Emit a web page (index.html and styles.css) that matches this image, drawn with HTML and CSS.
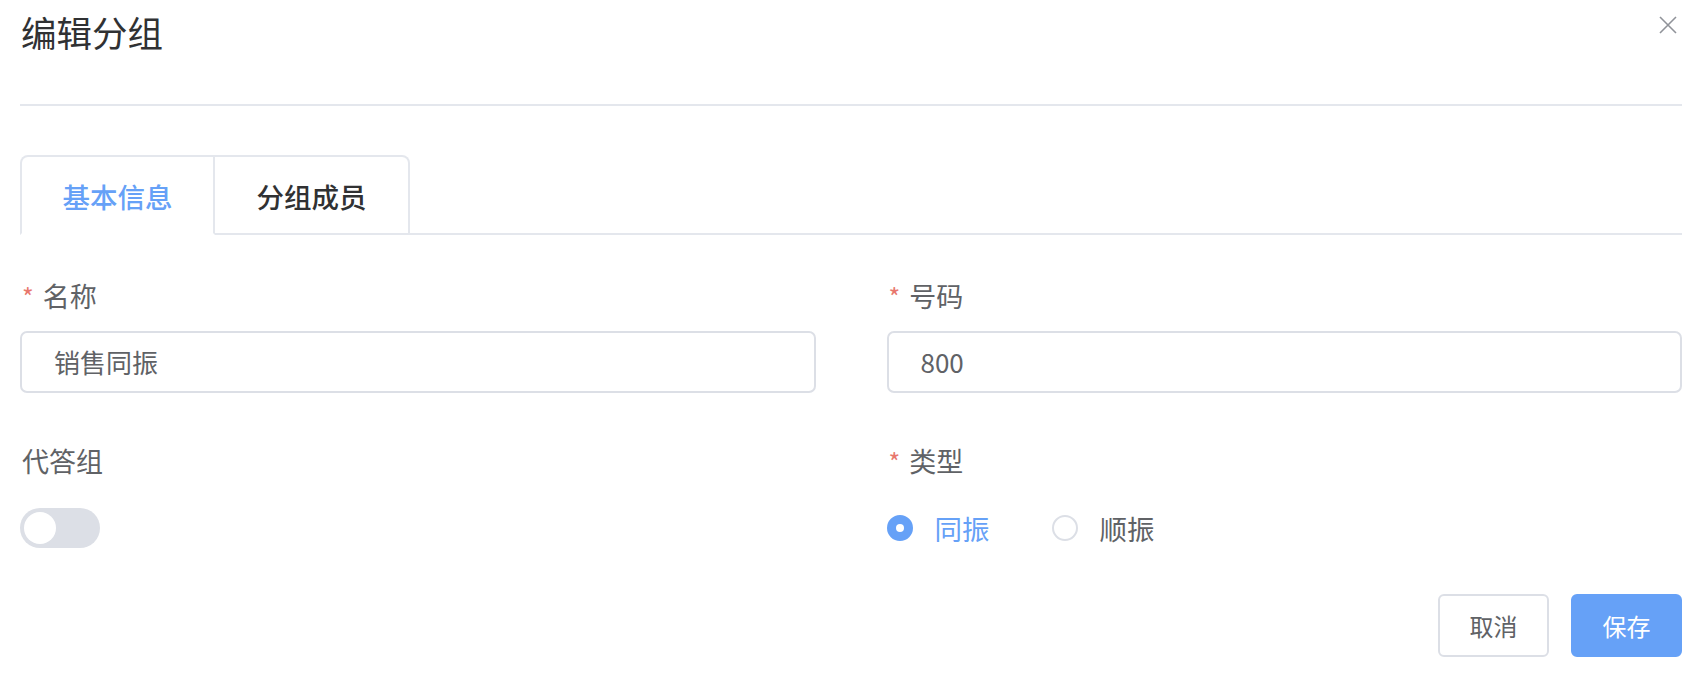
FILE: index.html
```html
<!DOCTYPE html>
<html lang="zh-CN">
<head>
<meta charset="utf-8">
<title>编辑分组</title>
<link rel="stylesheet" href="styles.css">
</head>
<body>
<div class="dialog">
  <div class="dialog-header">
    <span class="dialog-title">编辑分组</span>
    <button class="close-btn" aria-label="关闭">
      <svg width="18" height="18" viewBox="0 0 18 18"><path d="M1 1L17 17M17 1L1 17" stroke="#909399" stroke-width="1.6" fill="none"/></svg>
    </button>
  </div>
  <div class="tabs">
    <div class="tab active">基本信息</div>
    <div class="tab">分组成员</div>
  </div>
  <div class="form">
    <div class="form-item">
      <label class="label required">名称</label>
      <div class="input">销售同振</div>
    </div>
    <div class="form-item">
      <label class="label required">号码</label>
      <div class="input">800</div>
    </div>
    <div class="form-item">
      <label class="label">代答组</label>
      <div class="control"><span class="switch"><span class="knob"></span></span></div>
    </div>
    <div class="form-item">
      <label class="label required">类型</label>
      <div class="control radios">
        <span class="radio checked"><span class="radio-dot"></span><span class="radio-text">同振</span></span>
        <span class="radio"><span class="radio-dot"></span><span class="radio-text">顺振</span></span>
      </div>
    </div>
  </div>
  <div class="footer">
    <button class="btn">取消</button>
    <button class="btn primary">保存</button>
  </div>
</div>
</body>
</html>
```
FILE: styles.css
```css
* { box-sizing: border-box; }
html, body { margin: 0; padding: 0; background: #fff; }
body {
  font-family: "Noto Sans CJK SC", "Liberation Sans", sans-serif;
  color: #606266;
}
.dialog { padding: 0 24px 0 20px; }
.dialog-header {
  display: flex;
  justify-content: space-between;
  align-items: flex-start;
  height: 106px;
  padding-top: 7px;
  border-bottom: 2px solid #e4e7ed;
}
.dialog-title {
  font-size: 35.5px;
  line-height: 50px;
  color: #303133;
  padding-left: 1px;
}
.close-btn {
  border: 0;
  background: none;
  padding: 0;
  margin: 9px 5px 0 0;
  width: 18px;
  height: 18px;
  display: flex;
}
.tabs {
  display: flex;
  margin-top: 49px;
  border-bottom: 2px solid #e4e7ed;
  height: 80px;
}
.tab {
  width: 195px;
  height: 80px;
  display: flex;
  align-items: center;
  justify-content: center;
  font-size: 27.5px;
  font-weight: 500;
  color: #303133;
  border: 2px solid #e4e7ed;
  border-left: 0;
  border-bottom: 2px solid #e4e7ed;
  padding-top: 2px;
}
.tab:first-child {
  border-left: 2px solid #e4e7ed;
  border-top-left-radius: 8px;
}
.tab:last-child { border-top-right-radius: 8px; }
.tab.active {
  color: #66a1f7;
  border-bottom-color: #fff;
}
.form {
  display: grid;
  grid-template-columns: 1fr 1fr;
  column-gap: 71px;
  row-gap: 48px;
  margin-top: 41px;
}
.form-item { display: flex; flex-direction: column; }
.label {
  font-size: 27px;
  line-height: 40px;
  color: #606266;
  padding-left: 2px;
}
.label.required::before {
  content: "*";
  color: #e8776d;
  margin-right: 9px;
  font-size: 25px;
}
.input {
  margin-top: 15px;
  height: 62px;
  border: 2px solid #dcdfe6;
  border-radius: 7px;
  padding-left: 32px;
  font-size: 26px;
  line-height: 58px;
  color: #606266;
}
.control {
  margin-top: 27px;
  height: 40px;
  display: flex;
  align-items: center;
}
.switch {
  width: 80px;
  height: 40px;
  border-radius: 20px;
  background: #dcdfe6;
  display: flex;
  align-items: center;
  padding-left: 4px;
}
.knob {
  width: 32px;
  height: 32px;
  border-radius: 50%;
  background: #fff;
}
.radio {
  display: flex;
  align-items: center;
  margin-right: 62px;
  font-size: 27.5px;
  color: #606266;
}
.radio-dot {
  width: 26px;
  height: 26px;
  border-radius: 50%;
  border: 2px solid #dcdfe6;
  background: #fff;
  margin-right: 22px;
  display: flex;
  align-items: center;
  justify-content: center;
}
.radio.checked { color: #66a1f7; }
.radio.checked .radio-dot {
  border-color: #66a1f7;
  background: #66a1f7;
}
.radio.checked .radio-dot::after {
  content: "";
  width: 8px;
  height: 8px;
  border-radius: 50%;
  background: #fff;
}
.footer {
  display: flex;
  justify-content: flex-end;
  gap: 22px;
  margin-top: 46px;
}
.btn {
  width: 111px;
  height: 63px;
  border: 2px solid #dcdfe6;
  border-radius: 6px;
  background: #fff;
  color: #606266;
  font-family: inherit;
  font-size: 24px;
  padding: 0;
}
.btn.primary {
  background: #66a1f7;
  border-color: #66a1f7;
  color: #fff;
}
```
